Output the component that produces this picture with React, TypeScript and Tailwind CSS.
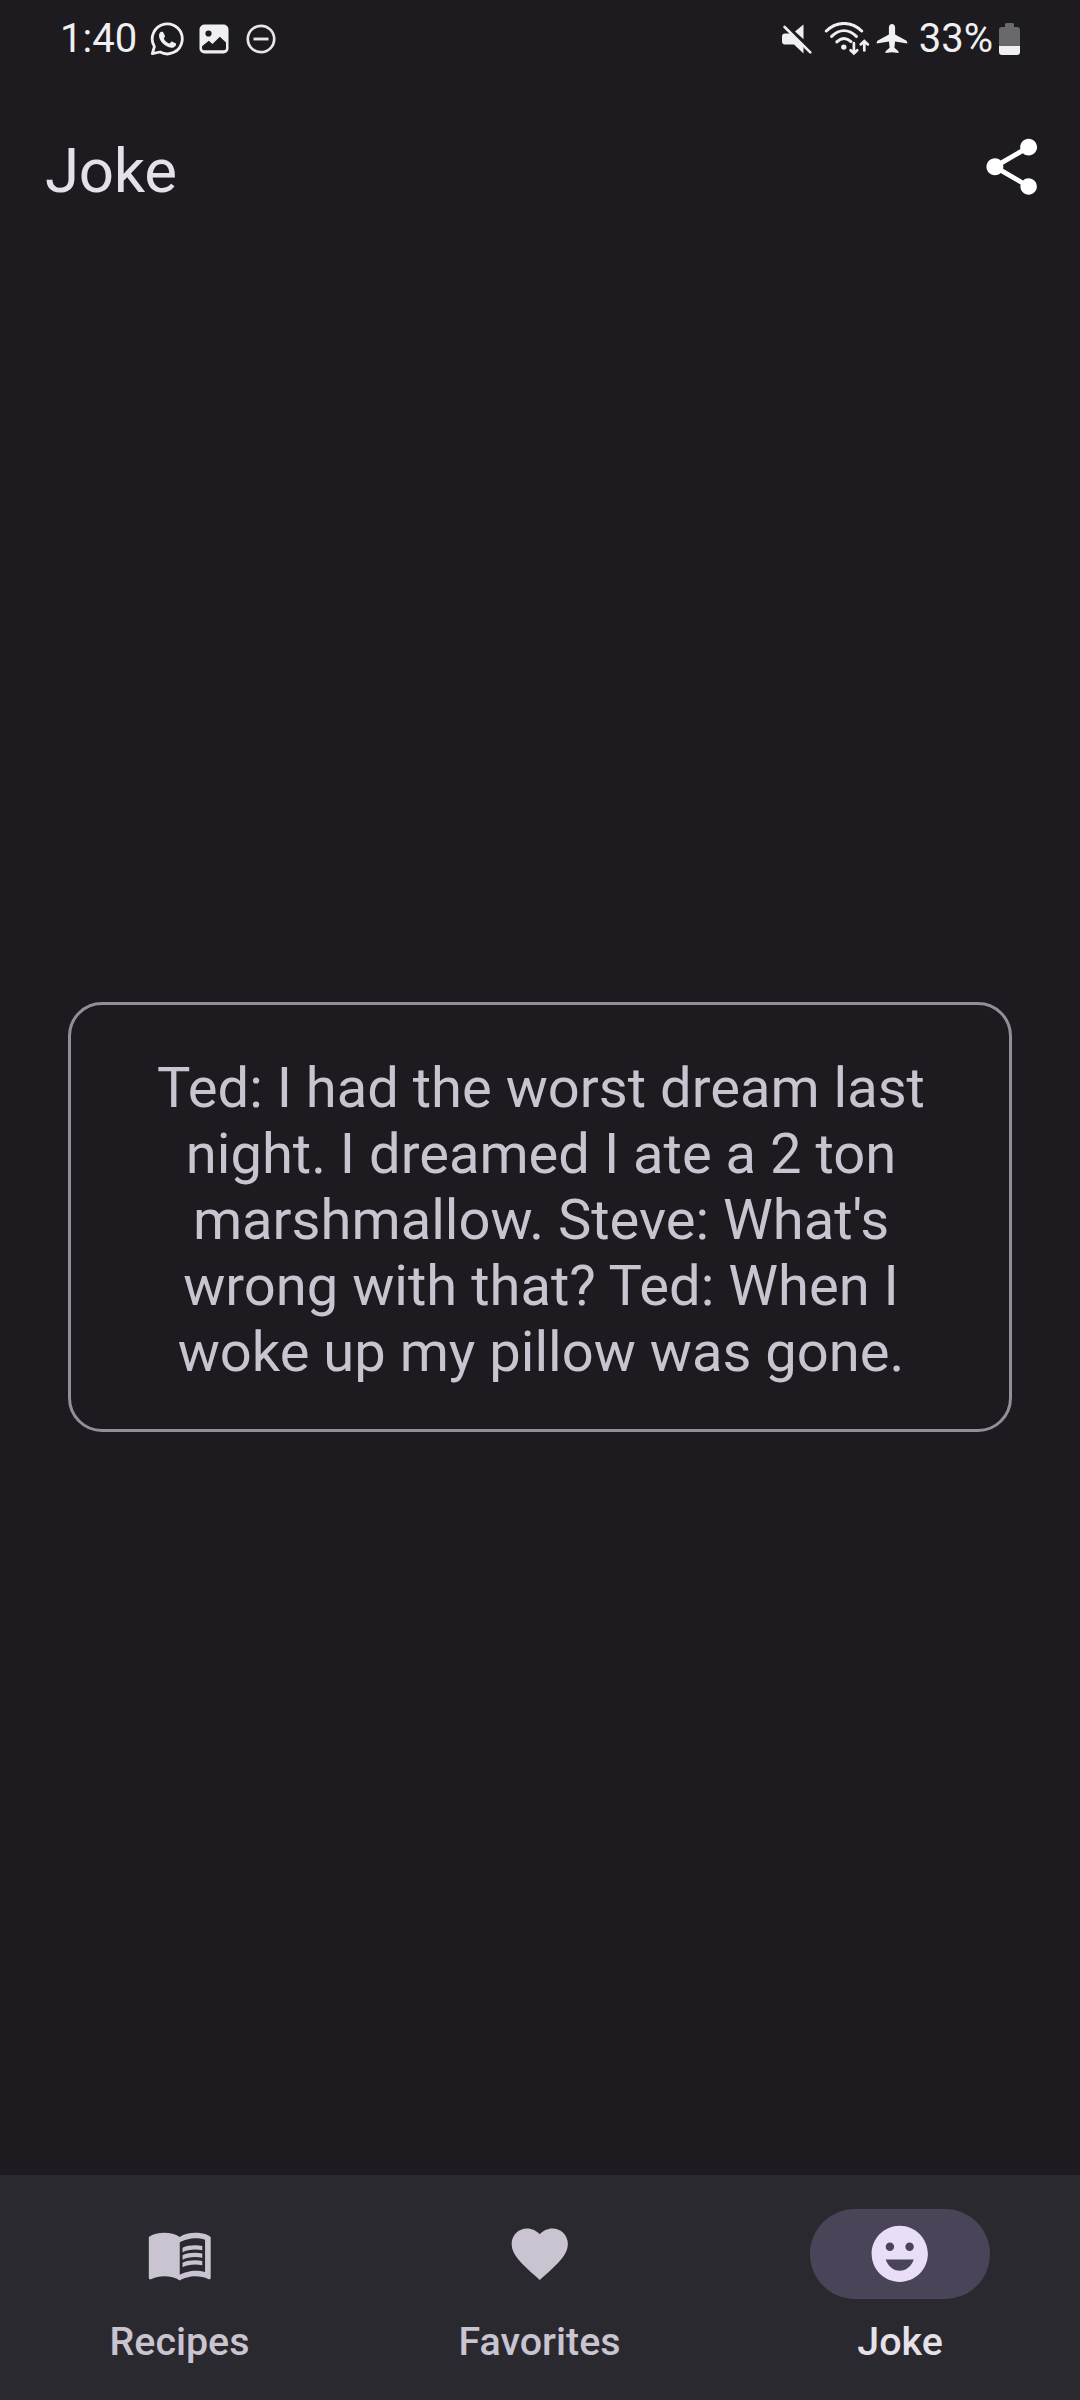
import React from "react";
import { MdEmojiEmotions, MdFavorite, MdMenuBook, MdShare } from "react-icons/md";
import type { IconType } from "react-icons";

function WhatsAppIcon() {
  return (
    <svg className="ml-[12px] h-[36px] w-[36px]" viewBox="0 0 36 36" fill="none">
      <path
        d="M3.3 32.6 L5.4 25.6 A15 15 0 1 1 11 31 Z"
        stroke="#f0eff1"
        strokeWidth="2.8"
        strokeLinejoin="round"
      />
      <path
        d="M10.6 12.2c.9-1.6 2.4-1.8 3.4-1.2l2 4c.1.9-.9 1.8-1.2 2.4 1 2.3 3 4.1 5.6 5.2.8-.2 1.5-2 2.4-2.1l4.2 2.1c.5 2.5-2.2 4.4-4.5 4.2-6.5-.8-12.3-6.5-12.5-12 0-.9.2-1.9.6-2.6z"
        fill="#f0eff1"
      />
    </svg>
  );
}

function GalleryIcon() {
  return (
    <svg className="ml-[14px] h-[30px] w-[30px]" viewBox="0 0 30 30">
      <rect x="0.5" y="0.5" width="29" height="29" rx="5" fill="#f0eff1" />
      <circle cx="9.5" cy="9.5" r="3.1" fill="#1d1b20" />
      <path
        d="M3 22.3 L9.8 16.8 L13.5 20 L20.8 12.8 L27 18.5 V24.2 A2 2 0 0 1 25 26.2 H5 A2 2 0 0 1 3 24.2 Z"
        fill="#1d1b20"
      />
    </svg>
  );
}

function DoNotDisturbIcon() {
  return (
    <svg className="ml-[17px] h-[30px] w-[30px]" viewBox="0 0 30 30" fill="none" stroke="#e6e5e7">
      <circle cx="15" cy="15" r="13.2" strokeWidth="2.7" />
      <path d="M7.5 15h15" strokeWidth="2.9" />
    </svg>
  );
}

function MuteIcon() {
  return (
    <svg className="h-[30px] w-[30px]" viewBox="0 0 30 30" fill="#f0eff1">
      <path d="M3 9.5h5.2L21.5 22.5v7L12 20.5H3a3 3 0 0 1-3-3v-5a3 3 0 0 1 3-3z" />
      <path d="M21.5 .5v14.8L13 7.6z" />
      <path d="M2.6 3L28.3 28.4" stroke="#f0eff1" strokeWidth="2.6" strokeLinecap="round" />
    </svg>
  );
}

function WifiIcon() {
  return (
    <svg
      className="ml-[12px] h-[34px] w-[46px]"
      viewBox="0 0.8 46 34"
      fill="none"
      stroke="#f0eff1"
      strokeLinecap="round"
      strokeWidth="3"
    >
      <path d="M2.3 9.8C12.8 -.3 27.2 -.3 37.7 9.8" />
      <path d="M7.6 15.2C15.5 7.6 24.5 7.6 32.4 15.2" />
      <path d="M12.8 20.7C17.5 16.4 22.5 16.4 27 20.4" />
      <circle cx="19.8" cy="25.9" r="2.7" fill="#f0eff1" stroke="none" />
      <path d="M29.9 22v9.3M26.6 29l3.3 3.2 3.3-3.2" strokeWidth="2.7" />
      <path d="M40.3 29.2v-8.9M36.7 23.2l3.6-3.4 3.6 3.4" strokeWidth="2.7" />
    </svg>
  );
}

function AirplaneIcon() {
  return (
    <svg className="ml-[6px] h-[30px] w-[32px]" viewBox="0 0 32 30" fill="#f0eff1">
      <path d="M16 0c1.7 0 3.1 1.5 3.1 3.3v7.1l11 6.1c1 .6 1.3 1.6 1.2 2.9l-12.2-1.8-.7 6.2 3.7 3.1c.4.4.5 1 .4 2.2L16 28.2l-6.5.9c-.1-1.2 0-1.8.4-2.2l3.7-3.1-.7-6.2L.7 19.4c-.1-1.3.2-2.3 1.2-2.9l11-6.1V3.3C12.9 1.5 14.3 0 16 0z" />
    </svg>
  );
}

function BatteryIcon() {
  return (
    <svg className="ml-[6px] h-[32px] w-[21px]" viewBox="0 0 21 32">
      <path
        d="M6 1.5A1.5 1.5 0 0 1 7.5 0h6A1.5 1.5 0 0 1 15 1.5V4h3a3 3 0 0 1 3 3v16H0V7a3 3 0 0 1 3-3h3z"
        fill="#69686b"
      />
      <path d="M0 23h21v6a3 3 0 0 1-3 3H3a3 3 0 0 1-3-3z" fill="#f0eff1" />
    </svg>
  );
}

function StatusBar() {
  return (
    <div className="flex h-[78px] items-center justify-between pr-[60px] pl-[60px] text-[40px] leading-none text-[#f0eff1]">
      <div className="flex items-center">
        <span>1:40</span>
        <WhatsAppIcon />
        <GalleryIcon />
        <DoNotDisturbIcon />
      </div>
      <div className="flex items-center">
        <MuteIcon />
        <WifiIcon />
        <AirplaneIcon />
        <span className="ml-[11px]">33%</span>
        <BatteryIcon />
      </div>
    </div>
  );
}

interface Tab {
  label: string;
  icon: IconType;
  active?: boolean;
}

const tabs: Tab[] = [
  { label: "Recipes", icon: MdMenuBook },
  { label: "Favorites", icon: MdFavorite },
  { label: "Joke", icon: MdEmojiEmotions, active: true },
];

function NavItem({ label, icon: Icon, active }: Tab) {
  return (
    <button className="flex flex-col items-center pt-[34px]">
      <span
        className={
          active
            ? "flex h-[90px] w-[180px] items-center justify-center rounded-full bg-[#4a4458] text-[#e8def8]"
            : "flex h-[90px] w-[180px] items-center justify-center text-[#cac4d0]"
        }
      >
        <Icon className="size-[67.5px]" />
      </span>
      <span
        className={
          active
            ? "mt-[20px] text-[39.4px] leading-[46px] font-medium text-[#e6e0e9]"
            : "mt-[20px] pr-px text-[39.4px] leading-[46px] font-medium text-[#cac4d0]"
        }
      >
        {label}
      </span>
    </button>
  );
}

export default function App() {
  return (
    <div className="flex h-[2400px] w-[1080px] flex-col bg-[#1d1b20] font-['Roboto',sans-serif]">
      <StatusBar />
      <header className="flex h-[178px] items-center justify-between pr-[35px] pl-[45px]">
        <h1 className="pt-[8px] text-[61.9px] leading-[72px] tracking-[-0.3px] text-[#e6e0e9]">Joke</h1>
        <MdShare className="size-[67.5px] text-white" />
      </header>
      <main className="flex flex-1 items-center justify-center pt-[2px]">
        <section className="flex h-[430px] w-[944px] items-center justify-center rounded-[34px] border-[3px] border-[#938f99]">
          <p className="w-[792px] pt-[6px] pl-[2px] text-center text-[56.1px] leading-[66px] text-[#cac4d0]">
            Ted: I had the worst dream last night. I dreamed I ate a 2 ton marshmallow. Steve:
            What's wrong with that? Ted: When I woke up my pillow was gone.
          </p>
        </section>
      </main>
      <nav className="grid h-[225px] grid-cols-3 bg-[#2b2930]">
        {tabs.map((tab) => (
          <NavItem key={tab.label} {...tab} />
        ))}
      </nav>
    </div>
  );
}
